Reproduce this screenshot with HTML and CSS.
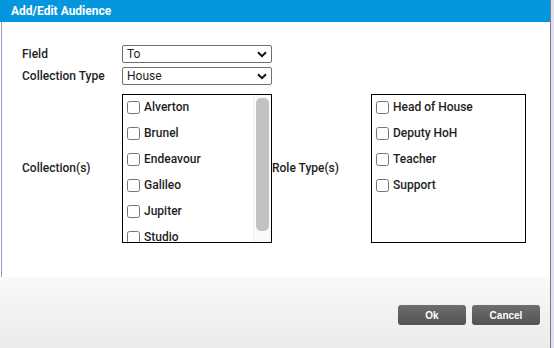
FILE: index.html
```html
<!DOCTYPE html>
<html lang="en">
<head>
    <meta charset="UTF-8">
    <title>Add/Edit Audience</title>
    <link rel="stylesheet" href="styles.css">
</head>
<body>

    <div class="dialog">

        <div class="titlebar">Add/Edit Audience</div>

        <div class="content">
            <div class="form">

                <label class="lbl" for="field">Field</label>
                <div class="select" id="field"><span>To</span>
                    <svg class="chev" width="10" height="7" viewBox="0 0 10 7"><path d="M1 1.2 L5 5.2 L9 1.2" fill="none" stroke="#111" stroke-width="2"/></svg>
                </div>
                <div></div><div></div>

                <label class="lbl" for="ctype">Collection Type</label>
                <div class="select" id="ctype"><span>House</span>
                    <svg class="chev" width="10" height="7" viewBox="0 0 10 7"><path d="M1 1.2 L5 5.2 L9 1.2" fill="none" stroke="#111" stroke-width="2"/></svg>
                </div>
                <div></div><div></div>

                <label class="lbl low">Collection(s)</label>
                <div class="listbox">
                    <div class="items">
                        <label class="item"><input type="checkbox">Alverton</label>
                        <label class="item"><input type="checkbox">Brunel</label>
                        <label class="item"><input type="checkbox">Endeavour</label>
                        <label class="item"><input type="checkbox">Galileo</label>
                        <label class="item"><input type="checkbox">Jupiter</label>
                        <label class="item"><input type="checkbox">Studio</label>
                    </div>
                    <div class="track"><div class="thumb"></div></div>
                </div>
                <label class="lbl low">Role Type(s)</label>
                <div class="listbox">
                    <div class="items">
                        <label class="item"><input type="checkbox">Head of House</label>
                        <label class="item"><input type="checkbox">Deputy HoH</label>
                        <label class="item"><input type="checkbox">Teacher</label>
                        <label class="item"><input type="checkbox">Support</label>
                    </div>
                </div>

            </div>
        </div>

        <div class="footer">
            <button class="btn">Ok</button>
            <button class="btn">Cancel</button>
        </div>

    </div>

</body>
</html>
```

FILE: styles.css
```css
body {
    margin: 0;
    background: #e2defa;
    font-family: Roboto, "Liberation Sans", sans-serif;
    color: #1e1e1e;
}

.dialog {
    width: 550px;
    height: 348px;
    display: flex;
    flex-direction: column;
    background: #ffffff;
    border-right: 1px solid #7c7c7c;
}

.titlebar {
    height: 22px;
    line-height: 22px;
    padding-left: 11px;
    background: #0396dd;
    color: #ffffff;
    font-size: 12px;
    font-weight: bold;
}

.content {
    flex: 1;
    padding: 23px 0 0 20px;
    border-left: 1px solid #9d97c4;
    margin-left: 1px;
}

.form {
    display: grid;
    grid-template-columns: 100px 150px 99px 155px;
    grid-template-rows: 18px 18px 149px;
    row-gap: 4px;
    align-items: center;
}

.form .listbox,
.form .low {
    margin-top: 9px;
}

.lbl {
    font-size: 12px;
    font-weight: 500;
}

.select {
    height: 16px;
    border: 1px solid #6f6f6f;
    border-radius: 2px;
    display: flex;
    align-items: center;
    justify-content: space-between;
    padding: 0 4px 0 4px;
    font-size: 12px;
}

.listbox {
    height: 147px;
    border: 1px solid #000000;
    display: flex;
    overflow: hidden;
}

.items {
    flex: 1;
    padding: 3px 0 0 4px;
}

.item {
    display: flex;
    align-items: center;
    height: 19px;
    margin-bottom: 7px;
    font-size: 12px;
    font-weight: 500;
}

.item input {
    width: 13px;
    height: 13px;
    margin: 0 4px 0 0;
}

.track {
    width: 13px;
    border-left: 1px solid #ededed;
    padding: 3px 2px;
    background: #fafafa;
}

.thumb {
    height: 133px;
    background: #c2c2c2;
    border-radius: 5px;
}

.footer {
    height: 71px;
    background: linear-gradient(#f9f9f9, #ebebeb);
    display: flex;
    justify-content: flex-end;
    align-items: flex-start;
    gap: 6px;
    padding: 28px 10px 0 0;
    box-sizing: border-box;
}

.btn {
    width: 68px;
    height: 20px;
    border: none;
    border-radius: 3px;
    background: linear-gradient(#6e6e6e, #525252);
    color: #ffffff;
    font-family: "Liberation Sans", sans-serif;
    font-size: 10px;
    font-weight: bold;
}
```
